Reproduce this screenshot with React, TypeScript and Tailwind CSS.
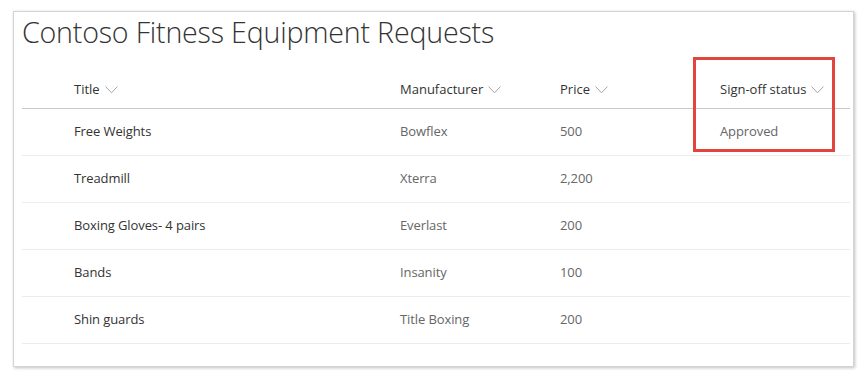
import React from 'react';

const rows = [
  { title: 'Free Weights', maker: 'Bowflex', price: '500', status: 'Approved' },
  { title: 'Treadmill', maker: 'Xterra', price: '2,200', status: '' },
  { title: 'Boxing Gloves- 4 pairs', maker: 'Everlast', price: '200', status: '' },
  { title: 'Bands', maker: 'Insanity', price: '100', status: '' },
  { title: 'Shin guards', maker: 'Title Boxing', price: '200', status: '' },
];

function Chevron() {
  return (
    <svg width="13" height="8" viewBox="0 0 13 8" className="ml-[5px] mt-[2px]">
      <path d="M0.5 0.5 L6.5 6.8 L12.5 0.5" fill="none" stroke="#a6a6a6" strokeWidth="1" />
    </svg>
  );
}

function HeaderCell({ label, w }: { label: string; w: string }) {
  return (
    <div className={`${w} flex items-center text-[#333] text-[13px]`}>
      {label}
      <Chevron />
    </div>
  );
}

export default function App() {
  return (
    <div className="w-[868px] h-[380px] bg-white pt-[11px] pl-[13px]" style={{ fontFamily: '"Segoe UI", "Open Sans", sans-serif' }}>
      <div className="w-[841px] h-[356px] bg-white border border-[#d4d4d4] shadow-[1px_1px_3px_rgba(0,0,0,0.25)] pl-[8px] pr-[3px]">
        <h1 className="text-[28.6px] font-light text-[#333] leading-[40px] tracking-[-0.2px]">
          Contoso Fitness Equipment Requests
        </h1>
        <div className="relative">
          <div className="flex h-[57px] items-end pb-[9px] pl-[52px] border-b border-[#c8c8c8]">
            <HeaderCell label="Title" w="w-[326px]" />
            <HeaderCell label="Manufacturer" w="w-[160px]" />
            <HeaderCell label="Price" w="w-[160px]" />
            <HeaderCell label="Sign-off status" w="w-[120px]" />
          </div>
          {rows.map((r) => (
            <div key={r.title} className="flex h-[47px] items-center pb-[1px] pl-[52px] border-b border-[#ececec] text-[13px] tracking-[-0.1px]">
              <div className="w-[326px] text-[#333]">{r.title}</div>
              <div className="w-[160px] text-[#666]">{r.maker}</div>
              <div className="w-[160px] text-[#666]">{r.price}</div>
              <div className="w-[120px] text-[#666]">{r.status}</div>
            </div>
          ))}
          <div className="absolute left-[671px] top-[5px] w-[142px] h-[95px] border-[3px] border-[#e2453c]" />
        </div>
      </div>
    </div>
  );
}
